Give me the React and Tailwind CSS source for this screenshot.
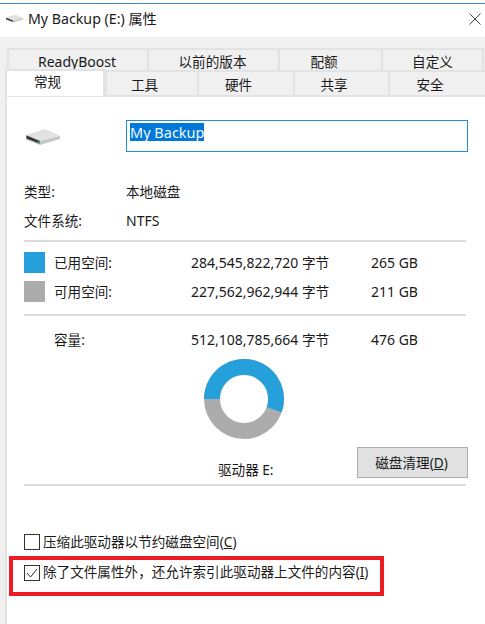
const font = { fontFamily: '"Noto Sans","Noto Sans CJK SC",sans-serif' };

function Drive({ className }) {
  return (
    <svg viewBox="0 0 34 18" className={className}>
      <path d="M0 7 L19 1 L34 8 L14 13 Z" fill="#e2e2e2" />
      <path d="M14 13 L34 8 L34 11 L14 17 Z" fill="#c6c6c6" />
      <path d="M0 7 L14 13 L14 17 L0 11.5 Z" fill="#b9b9b9" />
      <path d="M0.5 7.5 L14 13 L14 15.5 L0.5 10.5 Z" fill="#333333" />
      <rect x="12" y="12.8" width="2" height="2" fill="#27b04a" />
    </svg>
  );
}

function TabTop({ w, children, last, pad }) {
  return (
    <div className={`flex h-[23px] items-center justify-center border-t-2 border-l-2 border-[#e3e3e3] pt-[3px] ${last ? "border-r-2" : ""} ${w} ${pad || ""}`}>
      {children}
    </div>
  );
}
function TabLow({ w, children }) {
  return (
    <div className={`flex h-[23px] items-center justify-center border-l-2 border-[#e3e3e3] pr-[15px] pt-[3px] ${w}`}>
      {children}
    </div>
  );
}

function Divider({ className }) {
  return <div className={`ml-[24px] mr-[19px] h-[2px] bg-[#dcdcdc] ${className}`} />;
}

function SpaceRow({ swatch, label, bytes, size, className }) {
  return (
    <div className={`ml-[24px] flex h-[21px] items-center ${className}`}>
      <div className={`h-[21px] w-[21px] ${swatch}`} />
      <div className="ml-[9px] w-[137px]">{label}</div>
      <div className="w-[180px] whitespace-nowrap">
        <span className="text-[14px]">{bytes}</span> 字节
      </div>
      <div className="whitespace-nowrap text-[14px]">{size}</div>
    </div>
  );
}

function Donut() {
  const cx = 40, cy = 40, R = 40, r = 24;
  const a = (19.5 * Math.PI) / 180;
  const ex = cx + R * Math.cos(a), ey = cy + R * Math.sin(a);
  const ix = cx + r * Math.cos(a), iy = cy + r * Math.sin(a);
  return (
    <svg width="80" height="80" viewBox="0 0 80 80" className="block">
      <circle cx={cx} cy={cy} r={R} fill="#acacac" />
      <path d={`M0 40 A40 40 0 1 1 ${ex} ${ey} L${ix} ${iy} A24 24 0 1 0 16 40 Z`} fill="#26a0da" />
      <circle cx={cx} cy={cy} r={r} fill="#ffffff" />
    </svg>
  );
}

export default function App() {
  return (
    <div className="relative h-[624px] w-[485px] overflow-hidden bg-white text-[13.6px] leading-[20px] text-[#1a1a1a]" style={font}>
      <div className="mt-[3px] h-[1px] bg-[#3f86c6]" />
      <div className="flex h-[33px] items-center pb-[4px] pl-[6px] pr-[4px] text-[14.2px]">
        <Drive className="h-[9px] w-[17px]" />
        <span className="ml-[5px]">My Backup (E:) 属性</span>
        <svg viewBox="0 0 12 12" className="ml-auto h-[12px] w-[12px]" stroke="#4a4a4a" strokeWidth="1" fill="none">
          <path d="M0.5 0.5 L11.5 11.5 M11.5 0.5 L0.5 11.5" />
        </svg>
      </div>
      <div className="flex h-[587px] flex-col bg-[#f0f0f0] pt-[11px]">
        <div className="relative">
          <div className="ml-[7px] flex">
            <TabTop w="w-[140px] text-[14px]" pad="pr-[2px]">ReadyBoost</TabTop>
            <TabTop w="w-[131px]" pad="pr-[2px]">以前的版本</TabTop>
            <TabTop w="w-[103px]" pad="pr-[13px]">配额</TabTop>
            <TabTop w="w-[103px]" last>自定义</TabTop>
          </div>
          <div className="-mt-[1px] ml-[5px] flex border-y-2 border-[#e3e3e3] bg-[#f0f0f0]">
            <div className="w-[100px]" />
            <TabLow w="w-[92px]">工具</TabLow>
            <TabLow w="w-[96px]">硬件</TabLow>
            <TabLow w="w-[95px]">共享</TabLow>
            <TabLow w="w-[97px]">安全</TabLow>
          </div>
          <div className="absolute left-[5px] top-[21px] flex h-[27px] w-[100px] justify-center border-x-2 border-t-2 border-[#e3e3e3] bg-white pr-[15px] pt-[1px]">
            常规
          </div>
        </div>
        <div className="ml-[5px] flex-1 border-l-2 border-[#e3e3e3] bg-white">
          <div className="-ml-[7px]">
            <div className="flex items-center pt-[23px]">
              <Drive className="ml-[26px] h-[18px] w-[34px] translate-y-[1px]" />
              <div className="ml-[66px] flex h-[32px] w-[342px] items-start border border-[#2b8ad6] pl-[3px] pt-[2px] text-[14.5px]">
                <span className="bg-[#0078d7] leading-[18px] text-[#f2f7fc]">My Backup</span>
              </div>
            </div>
            <div className="ml-[24px] mt-[30px] flex h-[20px] items-center">
              <div className="w-[102px]">类型:</div>
              <div>本地磁盘</div>
            </div>
            <div className="ml-[24px] mt-[9px] flex h-[20px] items-center">
              <div className="w-[102px]">文件系统:</div>
              <div className="text-[14px]">NTFS</div>
            </div>
            <Divider className="mt-[9px]" />
            <SpaceRow swatch="bg-[#26a0da]" label="已用空间:" bytes="284,545,822,720" size="265 GB" className="mt-[10px]" />
            <SpaceRow swatch="bg-[#acacac]" label="可用空间:" bytes="227,562,962,944" size="211 GB" className="mt-[8px]" />
            <Divider className="mt-[12px]" />
            <SpaceRow swatch="bg-white" label="容量:" bytes="512,108,785,664" size="476 GB" className="mt-[13px]" />
            <div className="ml-[204px] mt-[9px]"><Donut /></div>
            <div className="flex items-start">
              <div className="ml-[218px] w-[139px] whitespace-nowrap pt-[21px]">驱动器 E:</div>
              <div className="mt-[8px] flex h-[31px] w-[111px] items-center justify-center whitespace-nowrap border border-[#adadad] bg-[#e1e1e1] pr-[2px]">
                磁盘清理(<span className="underline">D</span>)
              </div>
            </div>
            <Divider className="mt-[4px]" />
            <div className="ml-[24px] mt-[48px] flex h-[16px] items-center">
              <div className="h-[16px] w-[16px] border border-[#333333] bg-white" />
              <div className="ml-[3px] whitespace-nowrap">压缩此驱动器以节约磁盘空间(<span className="underline">C</span>)</div>
            </div>
            <div className="ml-[9px] mt-[6px] flex h-[40px] w-[375px] items-start border-4 border-[#ed1c24] pl-[11px] pt-[5px]">
              <div className="flex h-[16px] w-[16px] items-center justify-center border border-[#333333] bg-white">
                <svg viewBox="0 0 12 12" className="h-[12px] w-[12px]" fill="none" stroke="#333333" strokeWidth="1">
                  <path d="M1 6 L4.5 10 L11 2" />
                </svg>
              </div>
              <div className="-mt-[3px] ml-[3px] whitespace-nowrap">除了文件属性外，还允许索引此驱动器上文件的内容(<span className="underline">I</span>)</div>
            </div>
          </div>
        </div>
      </div>
    </div>
  );
}
